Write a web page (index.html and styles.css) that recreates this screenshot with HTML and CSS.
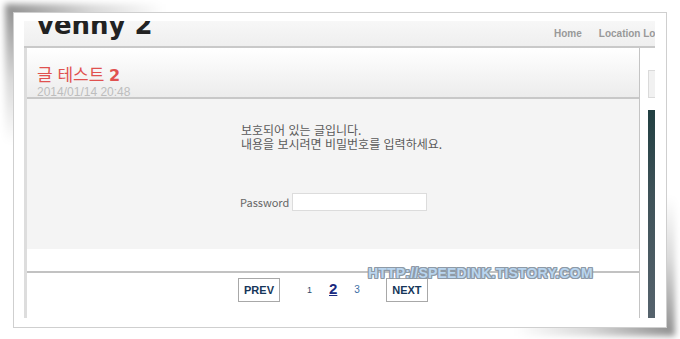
FILE: index.html
```html
<!DOCTYPE html>
<html lang="ko">
<head>
<meta charset="utf-8">
<title>venny 2</title>
<link rel="stylesheet" href="styles.css">
</head>
<body>
<div class="frame">
  <div class="shot">
    <header class="top">
      <div class="logo">venny 2</div>
      <nav class="nav"><a>Home</a><a>Location Log</a></nav>
    </header>
    <div class="layout">
      <main class="main">
        <div class="post-head">
          <h1 class="title">글 테스트 <b>2</b></h1>
          <div class="date">2014/01/14 20:48</div>
        </div>
        <div class="protected">
          <p class="notice">보호되어 있는 글입니다.<br>내용을 보시려면 비밀번호를 입력하세요.</p>
          <div class="pw"><label class="pw-label">Password</label><input class="pw-input" type="password"></div>
        </div>
        <div class="spacer"></div>
        <div class="paging">
          <a class="pbtn">PREV</a>
          <a class="num n1">1</a>
          <a class="num cur">2</a>
          <a class="num n3">3</a>
          <a class="pbtn next">NEXT</a>
        </div>
      </main>
      <aside class="side">
        <div class="search"></div>
        <div class="bar"></div>
      </aside>
    </div>
  </div>
  <div class="watermark">HTTP://SPEEDINK.TISTORY.COM</div>
</div>
</body>
</html>
```

FILE: styles.css
```css
* { box-sizing: border-box; }
html { background: #fff; }
html, body { margin: 0; padding: 0; }
body { width: 680px; height: 339px; overflow: hidden; font-family: "Liberation Sans", Arial, sans-serif; }

.frame {
  position: relative;
  margin: 12px 0 0 13px;
  width: 654px;
  height: 316px;
  padding: 8px 11px 9px 10px;
  border: 1px solid #cfcfcf;
  background: #fff;
}
.frame::before {
  content: "";
  position: absolute;
  left: -9px; top: -9px;
  width: 170px; height: 150px;
  background: radial-gradient(ellipse 160px 140px at 0 0, rgba(0,0,0,0.45), rgba(0,0,0,0.15) 55%, rgba(0,0,0,0) 100%);
  filter: blur(3px);
  z-index: -1;
}
.frame::after {
  content: "";
  position: absolute;
  right: -9px; bottom: -9px;
  width: 170px; height: 150px;
  background: radial-gradient(ellipse 160px 140px at 100% 100%, rgba(0,0,0,0.45), rgba(0,0,0,0.15) 55%, rgba(0,0,0,0) 100%);
  filter: blur(3px);
  z-index: -1;
}

.shot {
  width: 631px;
  height: 297px;
  overflow: hidden;
  display: flex;
  flex-direction: column;
  background: #fff;
}

.top {
  height: 27px;
  flex: none;
  display: flex;
  overflow: hidden;
  padding-left: 13px;
  background: linear-gradient(#f7f7f7, #efefef);
  border-bottom: 2px solid #c9c9c9;
}
.logo {
  flex: 1 1 auto;
  margin-top: -9px;
  font-family: "DejaVu Sans", Verdana, sans-serif;
  font-weight: bold;
  font-size: 26px;
  line-height: 26px;
  color: #222;
  white-space: nowrap;
}
.nav {
  flex: 0 0 101px;
  width: 101px;
  white-space: nowrap;
  overflow: hidden;
  padding-top: 7px;
  font-size: 10px;
  line-height: 12px;
  font-weight: bold;
  color: #999;
}
.nav a { margin-right: 17px; }

.layout {
  flex: 1;
  display: flex;
}
.main {
  width: 616px;
  flex: none;
  display: flex;
  flex-direction: column;
  border-left: 3px solid #dddddd;
  border-right: 1px solid #c4c4c4;
  border-bottom: 1px solid #cccccc;
}
.post-head {
  height: 51px;
  padding: 16px 0 0 10px;
  background: linear-gradient(#ffffff, #ececec);
  border-bottom: 2px solid #c8c8c8;
}
.title {
  margin: 0;
  font-family: "Noto Sans CJK KR", sans-serif;
  font-weight: normal;
  font-size: 17px;
  line-height: 20px;
  color: #e0514f;
}
.title b { font-family: "DejaVu Sans", Verdana, sans-serif; font-size: 16px; font-weight: bold; }
.date {
  font-size: 12px;
  line-height: 13px;
  color: #bdbdbd;
}

.protected {
  height: 150px;
  padding: 24px 0 0 213px;
  background: #f4f4f4;
  font-family: "Noto Sans CJK KR", sans-serif;
  color: #5a5a5a;
}
.notice {
  margin: 0 0 0 1px;
  font-size: 12px;
  line-height: 14px;
}
.pw {
  margin-top: 42px;
  display: flex;
  align-items: center;
  gap: 3px;
}
.pw-label { font-size: 11px; color: #666; }
.pw-input {
  width: 135px;
  height: 18px;
  margin: 0;
  padding: 0;
  border: 1px solid #dcdcdc;
  background: #fff;
}

.spacer { height: 22px; background: #fff; }

.paging {
  height: 46px;
  border-top: 2px solid #c2c2c2;
  padding: 5px 0 0 211px;
  display: flex;
  align-items: flex-start;
}
.pbtn {
  width: 42px;
  height: 24px;
  border: 1px solid #a8a8a8;
  display: flex;
  align-items: center;
  justify-content: center;
  font-size: 11px;
  font-weight: bold;
  color: #163659;
}
.num { line-height: 24px; }
.n1 { margin-left: 27px; font-size: 9px; color: #2d4b6b; }
.cur { margin-left: 17px; font-size: 15px; font-weight: bold; color: #1a2a80; text-decoration: underline; line-height: 22px; }
.n3 { margin-left: 17px; font-size: 10px; color: #3a6ea5; }
.next { margin-left: 26px; }

.side {
  width: 15px;
  flex: none;
  padding: 22px 0 0 8px;
}
.search {
  height: 28px;
  background: #f1f1f1;
  border: 1px solid #dadada;
  border-right: none;
}
.bar {
  margin-top: 12px;
  height: 210px;
  background: linear-gradient(#213f41, #3e5258 40%, #56636d);
}

.watermark {
  position: absolute;
  left: 354px;
  top: 252px;
  font-size: 14px;
  line-height: 16px;
  font-weight: bold;
  letter-spacing: 0.2px;
  white-space: nowrap;
  color: #b9d5ef;
  text-shadow:
    1px 0 0 #8e9aa6, -1px 0 0 #8e9aa6, 0 1px 0 #8e9aa6, 0 -1px 0 #8e9aa6,
    1px 1px 0 #8e9aa6, -1px -1px 0 #8e9aa6, 1px -1px 0 #8e9aa6, -1px 1px 0 #8e9aa6;
}
```
